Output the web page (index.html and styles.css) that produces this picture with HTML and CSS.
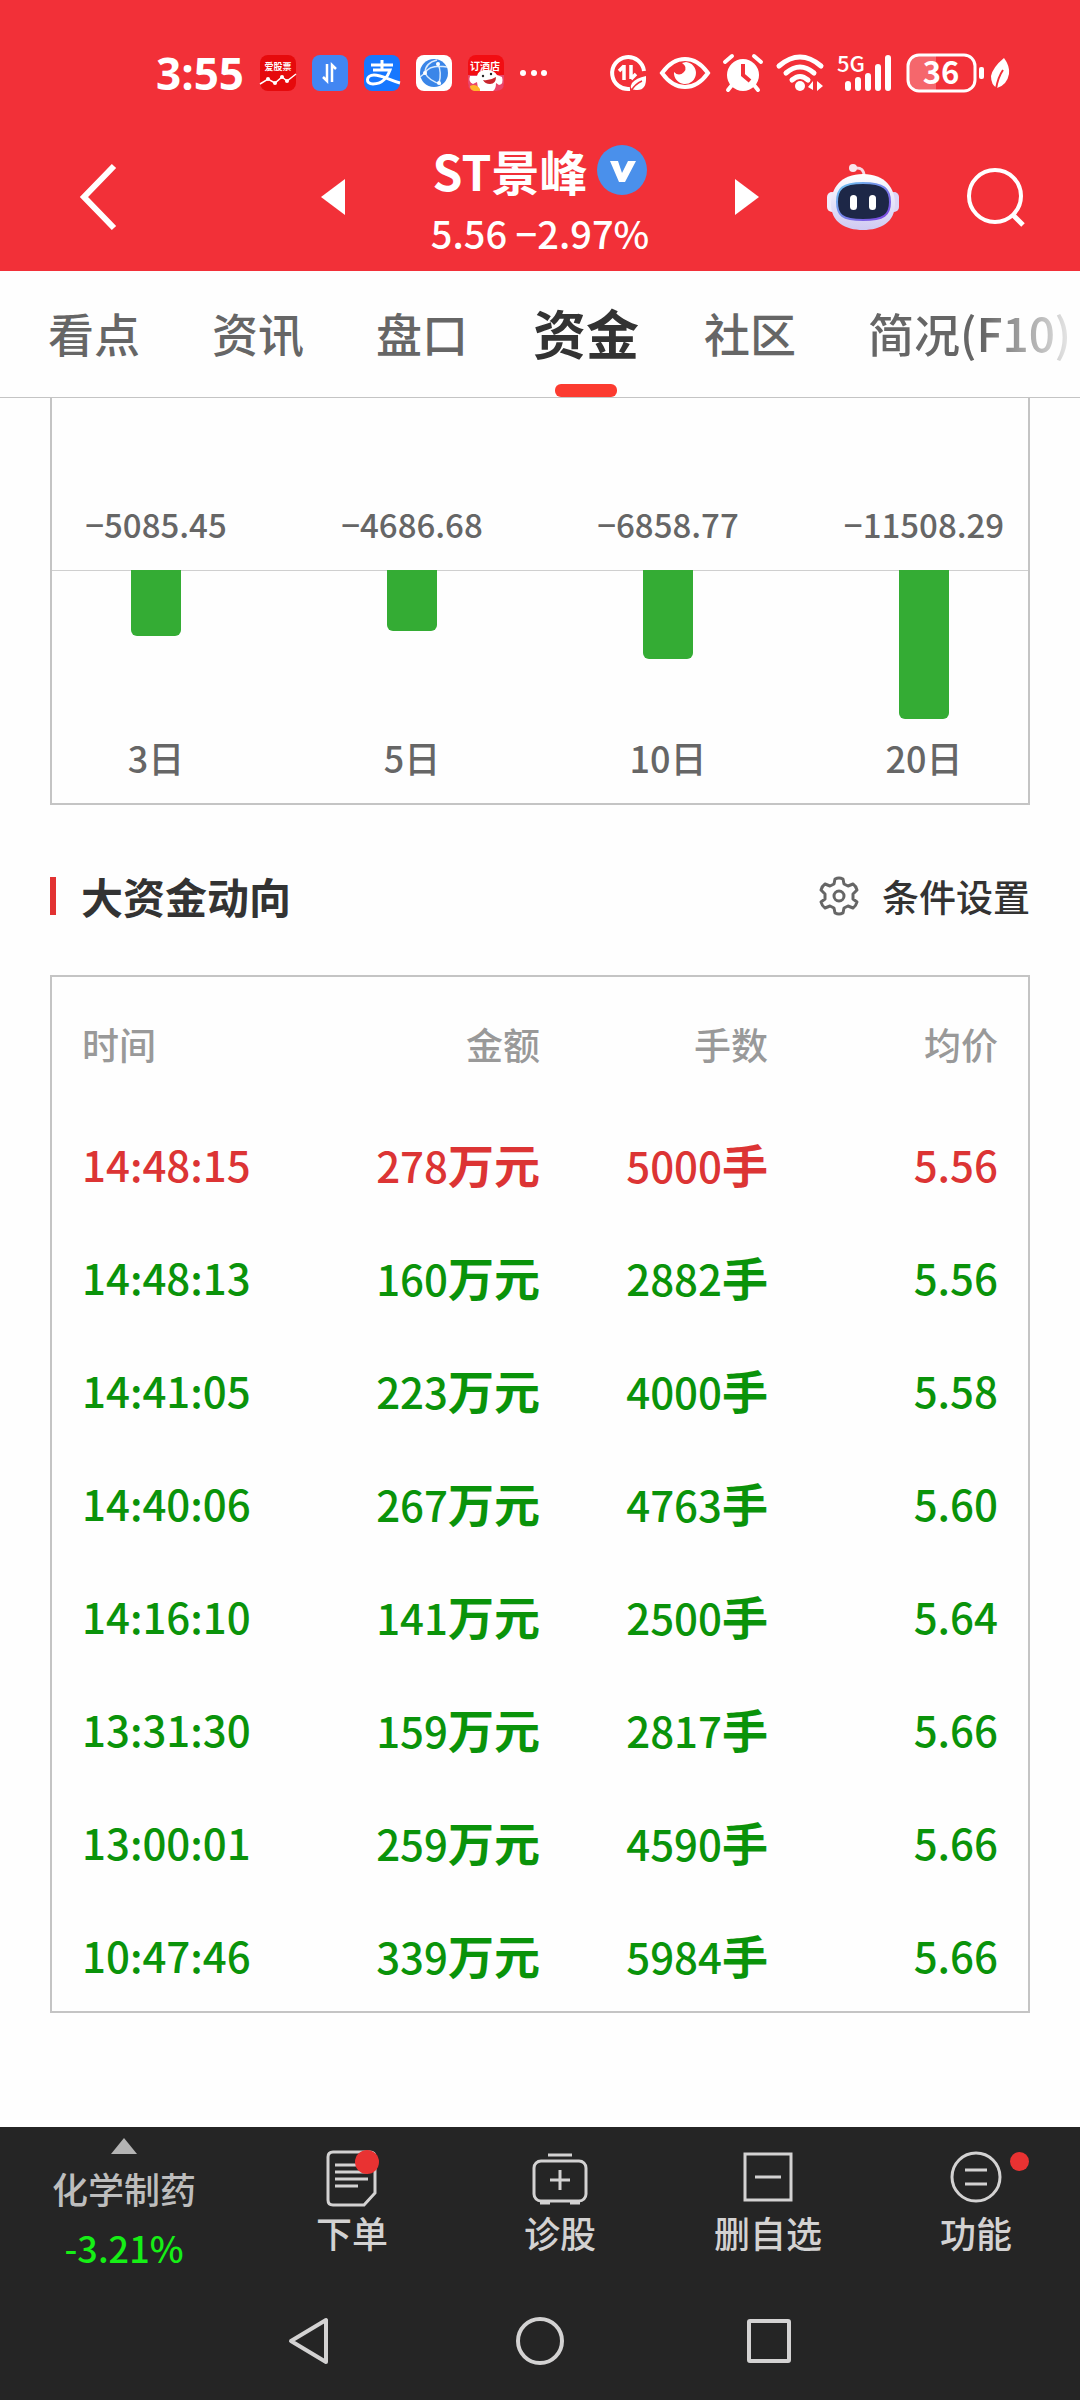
FILE: index.html
```html
<!DOCTYPE html>
<html lang="zh-CN">
<head>
  <meta charset="UTF-8" />
  <meta name="viewport" content="width=device-width, initial-scale=1.0"/>
  <title>ST景峰 - 资金</title>
  <link rel="stylesheet" href="styles.css">
</head>
<body>
  <header class="top">
    <!-- Status bar -->
    <div class="status-bar">
      <div class="status-left">
        <span class="clock">3:55</span>
        <svg class="app-icon" viewBox="0 0 36 36">
          <rect width="36" height="36" rx="8" fill="#e60a0c"/>
          <text x="18" y="15" font-size="9" font-weight="700" fill="#fff" text-anchor="middle">爱股票</text>
          <path d="M0 29L8 24L15 28L22 22L27 26L36 19" fill="none" stroke="#fff" stroke-width="1.5"/>
          <circle cx="8" cy="24" r="2" fill="#fff"/><circle cx="15" cy="28" r="2" fill="#fff"/><circle cx="22" cy="22" r="2" fill="#fff"/><circle cx="27" cy="26" r="2" fill="#fff"/>
        </svg>
        <svg class="app-icon" viewBox="0 0 36 36">
          <rect width="36" height="36" rx="8" fill="#4286f2"/>
          <path d="M15 9V26L11 22M20 27V10L24 14" fill="none" stroke="#fff" stroke-width="2.5"/>
        </svg>
        <svg class="app-icon" viewBox="0 0 36 36">
          <rect width="36" height="36" rx="8" fill="#1677ff"/>
          <path d="M7 10H29M18 5V15M9 15H26C24 21 19 29 9 29C1 29 2 20 10 20C18 20 25 25 36 28" fill="none" stroke="#fff" stroke-width="3"/>
        </svg>
        <svg class="app-icon" viewBox="0 0 36 36">
          <rect width="36" height="36" rx="8" fill="#fff"/>
          <circle cx="18" cy="18" r="14" fill="#3a86e8"/>
          <path d="M21 5Q9 8 9 18Q13 26 25 29M22 9Q26 18 23 28M9 18Q14 9 31 12M9 18L4 22" fill="none" stroke="#d9ebff" stroke-width="1.5"/>
          <circle cx="9" cy="18" r="2" fill="#fff"/><circle cx="22" cy="9" r="2" fill="#fff"/><circle cx="23" cy="28" r="2" fill="#fff"/>
        </svg>
        <svg class="app-icon" viewBox="0 0 36 36">
          <rect width="36" height="36" rx="8" fill="#f20d12"/>
          <path d="M0 20H36V28Q36 36 28 36H8Q0 36 0 28Z" fill="#e9466a"/>
          <text x="17" y="15" font-size="10" font-weight="700" fill="#fff" text-anchor="middle">订酒店</text>
          <path d="M9 21Q10 15 18 15Q26 15 29 20L34 22Q36 29 31 30L28 28Q28 34 25 36H12Q9 32 9 27L5 29Q0 27 2 21Z" fill="#fff"/>
          <path d="M15 25Q22 26 28 22Q28 29 22 29Q17 29 15 25Z" fill="#c9252d"/>
          <circle cx="15" cy="21" r="1.2" fill="#222"/><circle cx="23" cy="19" r="1.2" fill="#222"/>
          <path d="M2 31Q8 28 12 34V36H6Q2 35 2 31Z" fill="#ffb52b"/>
        </svg>
        <svg class="more-dots" viewBox="0 0 28 6" fill="#fff"><circle cx="3" cy="3" r="3"/><circle cx="14" cy="3" r="3"/><circle cx="24" cy="3" r="3"/></svg>
      </div>
      <div class="status-right">
        <svg width="38" height="38" viewBox="0 0 38 38" fill="none" stroke="#fff">
          <path d="M35 17A16 16 0 1 0 21 35" stroke-width="4"/>
          <path d="M15 11V26M15 12L10 17M22 11V25M22 25L27 20" stroke-width="3.5"/>
          <path d="M37 22Q38 37 27 36Q19 36 23 29Q27 24 37 22Z" fill="#fff" stroke="none"/>
          <path d="M22 37Q26 30 33 27" stroke="#f23038" stroke-width="1.5"/>
        </svg>
        <svg width="50" height="34" viewBox="0 0 50 34">
          <path d="M2 17Q12 3 25 3Q38 3 48 17Q38 31 25 31Q12 31 2 17Z" fill="none" stroke="#fff" stroke-width="4"/>
          <path d="M26 6A11 11 0 1 1 14 16Q19 21 24 16Q28 11 22 7Z" fill="#fff"/>
        </svg>
        <svg width="40" height="38" viewBox="0 0 40 38">
          <circle cx="20" cy="21" r="16" fill="#fff"/>
          <path d="M2 8L9 2M38 8L31 2M9 31L5 36M31 31L35 36" stroke="#fff" stroke-width="4" stroke-linecap="round"/>
          <path d="M20 10V21L27 27" fill="none" stroke="#f23038" stroke-width="4"/>
        </svg>
        <svg width="48" height="38" viewBox="0 0 48 38" fill="none" stroke="#fff" stroke-width="5" stroke-linecap="round">
          <path d="M3 12Q24 -6 45 12M10 19Q24 7 38 19M16 26Q24 19 32 26"/>
          <circle cx="24" cy="32" r="5" fill="#fff" stroke="none"/>
          <path d="M37 27V36L32 33ZM41 37V27L47 32Z" fill="#fff" stroke="none"/>
        </svg>
        <svg width="56" height="38" viewBox="0 0 56 38">
          <text x="0" y="18" font-size="22" font-weight="500" fill="#fff">5G</text>
          <path d="M11 30V34M21 26V34M31 22V34M41 13V34M51 4V34" stroke="#fff" stroke-width="6" stroke-linecap="round"/>
        </svg>
        <div class="battery">
          <svg width="80" height="40" viewBox="0 0 80 40">
            <path d="M14 2H30V38H14Q3 38 3 27V13Q3 2 14 2Z" fill="#f5676c"/>
            <rect x="2" y="2" width="67" height="36" rx="11" fill="none" stroke="#fff" stroke-width="3"/>
            <text x="35" y="31" font-size="31" font-weight="700" fill="#fff" text-anchor="middle">36</text>
            <rect x="73" y="14" width="5" height="12" rx="2" fill="#fff"/>
          </svg>
          <svg width="20" height="32" viewBox="0 0 20 32">
            <path d="M14 1Q20 9 19 17Q17 28 7 31Q1 28 1 19Q3 10 14 1Z" fill="#fff"/>
            <path d="M6 32Q8 20 13 13" fill="none" stroke="#f23038" stroke-width="2"/>
          </svg>
        </div>
      </div>
    </div>

    <!-- Stock header -->
    <div class="stock-header">
      <div class="side side-left">
        <button type="button" class="icon-btn" aria-label="返回">
          <svg width="36" height="66" viewBox="0 0 36 66"><path d="M34 2L4 33L34 64" fill="none" stroke="#fff" stroke-width="6"/></svg>
        </button>
        <button type="button" class="icon-btn" aria-label="上一只">
          <svg width="24" height="36" viewBox="0 0 24 36"><path d="M24 0V36L0 18Z" fill="#fff"/></svg>
        </button>
      </div>
      <div class="stock-title">
        <h1>ST景峰
          <svg width="50" height="50" viewBox="0 0 50 50"><circle cx="25" cy="25" r="25" fill="#4a90eb"/><path d="M13 16H21L25 28L31 16H39L28 37H22Z" fill="#fff"/></svg>
        </h1>
        <p>5.56 −2.97%</p>
      </div>
      <div class="side side-right">
        <button type="button" class="icon-btn" aria-label="下一只">
          <svg width="24" height="36" viewBox="0 0 24 36"><path d="M0 0V36L24 18Z" fill="#fff"/></svg>
        </button>
        <button type="button" class="icon-btn" aria-label="智能助手">
          <svg width="72" height="66" viewBox="0 0 72 66">
            <defs>
              <linearGradient id="shell" x1="0" y1="0" x2="0" y2="1"><stop offset="0" stop-color="#fff"/><stop offset="1" stop-color="#cfc9f2"/></linearGradient>
              <linearGradient id="rim" x1="0" y1="0" x2="1" y2="1"><stop offset="0" stop-color="#6fc7f0"/><stop offset="1" stop-color="#7c3fe0"/></linearGradient>
            </defs>
            <path d="M28 4Q37 3 37 12" fill="none" stroke="#f6d9e4" stroke-width="3"/>
            <circle cx="26" cy="4" r="4" fill="#f9e6ee"/>
            <rect x="0" y="28" width="10" height="20" rx="5" fill="#f0ecfb"/>
            <rect x="62" y="28" width="10" height="20" rx="5" fill="#dcd6f6"/>
            <path d="M36 10C58 10 68 24 68 40C68 58 54 66 36 66C18 66 4 58 4 40C4 24 14 10 36 10Z" fill="url(#shell)"/>
            <path d="M36 19C57 19 63 25 63 38C63 51 57 56 36 56C15 56 10 51 10 38C10 25 15 19 36 19Z" fill="#1d2747" stroke="url(#rim)" stroke-width="2"/>
            <rect x="23" y="31" width="7" height="15" rx="3.5" fill="#fff"/>
            <rect x="42" y="31" width="7" height="15" rx="3.5" fill="#fff"/>
          </svg>
        </button>
        <button type="button" class="icon-btn" aria-label="搜索">
          <svg width="60" height="60" viewBox="0 0 60 60" fill="none" stroke="#fff" stroke-width="4"><circle cx="29" cy="29" r="26"/><path d="M47 48L57 58" stroke-width="5"/></svg>
        </button>
      </div>
    </div>
  </header>

  <nav class="tabs">
    <a href="#">看点</a>
    <a href="#">资讯</a>
    <a href="#">盘口</a>
    <a href="#" class="active">资金</a>
    <a href="#">社区</a>
    <a href="#" class="fade">简况(F10)</a>
  </nav>

  <main class="content">
    <!-- Net inflow by period -->
    <section class="chart">
      <div class="chart-row chart-values">
        <span>−5085.45</span>
        <span>−4686.68</span>
        <span>−6858.77</span>
        <span>−11508.29</span>
      </div>
      <div class="chart-row chart-bars">
        <div class="bar" style="height: 66px"></div>
        <div class="bar" style="height: 61px"></div>
        <div class="bar" style="height: 89px"></div>
        <div class="bar" style="height: 149px"></div>
      </div>
      <div class="chart-row chart-labels">
        <span>3日</span>
        <span>5日</span>
        <span>10日</span>
        <span>20日</span>
      </div>
    </section>

    <div class="section-header">
      <h2>大资金动向</h2>
      <button type="button" class="settings-btn">
        <svg width="38" height="38" viewBox="0 0 38 38" fill="none" stroke="#666" stroke-width="3" stroke-linejoin="round">
          <path d="M15 2Q19 0 23 2L24 7L28 9L33 7Q36 9 37 13L33 17V22L37 25Q36 29 33 31L28 29L24 31L23 36Q19 38 15 36L14 31L10 29L5 31Q2 29 1 25L5 22V17L1 13Q2 9 5 7L10 9L14 7Z"/>
          <circle cx="19" cy="19" r="5"/>
        </svg>
        条件设置
      </button>
    </div>

    <!-- Large orders -->
    <section class="orders">
      <table>
        <colgroup>
          <col><col class="col-mid"><col class="col-mid"><col>
        </colgroup>
        <thead>
          <tr><th>时间</th><th>金额</th><th>手数</th><th>均价</th></tr>
        </thead>
        <tbody>
          <tr class="buy"><td>14:48:15</td><td>278<b>万元</b></td><td>5000<b>手</b></td><td>5.56</td></tr>
          <tr><td>14:48:13</td><td>160<b>万元</b></td><td>2882<b>手</b></td><td>5.56</td></tr>
          <tr><td>14:41:05</td><td>223<b>万元</b></td><td>4000<b>手</b></td><td>5.58</td></tr>
          <tr><td>14:40:06</td><td>267<b>万元</b></td><td>4763<b>手</b></td><td>5.60</td></tr>
          <tr><td>14:16:10</td><td>141<b>万元</b></td><td>2500<b>手</b></td><td>5.64</td></tr>
          <tr><td>13:31:30</td><td>159<b>万元</b></td><td>2817<b>手</b></td><td>5.66</td></tr>
          <tr><td>13:00:01</td><td>259<b>万元</b></td><td>4590<b>手</b></td><td>5.66</td></tr>
          <tr><td>10:47:46</td><td>339<b>万元</b></td><td>5984<b>手</b></td><td>5.66</td></tr>
        </tbody>
      </table>
    </section>
  </main>

  <footer class="bottom">
    <div class="toolbar">
      <button type="button" class="sector">
        <svg width="26" height="16" viewBox="0 0 26 16"><path d="M13 0L26 16H0Z" fill="#b4b4b4"/></svg>
        <span>化学制药</span>
        <span class="sector-change">-3.21%</span>
      </button>
      <button type="button" class="tool">
        <svg width="56" height="56" viewBox="0 0 56 56" fill="none" stroke="#d3d2d2" stroke-width="3">
          <path d="M9 2H46Q51 2 51 7V43L40 55H9Q4 55 4 50V7Q4 2 9 2Z"/>
          <path d="M11 15H44M11 22H44M11 29H44M11 36H34"/>
          <circle cx="43" cy="12" r="12" fill="#e93232" stroke="none"/>
        </svg>
        <span>下单</span>
      </button>
      <button type="button" class="tool">
        <svg width="58" height="56" viewBox="0 0 58 56" fill="none" stroke="#d3d2d2" stroke-width="3">
          <rect x="3" y="11" width="52" height="40" rx="7"/>
          <path d="M17 5H41M29 20V40M19 30H39M9 53H19M39 53H49"/>
        </svg>
        <span>诊股</span>
      </button>
      <button type="button" class="tool">
        <svg width="50" height="56" viewBox="0 0 50 56" fill="none" stroke="#d3d2d2" stroke-width="3">
          <rect x="2" y="4" width="46" height="46"/>
          <path d="M12 27H38"/>
        </svg>
        <span>删自选</span>
      </button>
      <button type="button" class="tool">
        <svg width="52" height="56" viewBox="0 0 52 56" fill="none" stroke="#d3d2d2" stroke-width="3">
          <circle cx="26" cy="27" r="24"/>
          <path d="M15 20H37M15 34H37"/>
        </svg>
        <span>功能</span>
        <i class="dot"></i>
      </button>
    </div>
    <div class="system-nav">
      <button type="button" class="icon-btn" aria-label="返回键">
        <svg width="48" height="48" viewBox="0 0 48 48"><path d="M40 3V45L5 24Z" fill="none" stroke="#d3d2d2" stroke-width="4" stroke-linejoin="round"/></svg>
      </button>
      <button type="button" class="icon-btn" aria-label="主屏幕">
        <svg width="48" height="48" viewBox="0 0 48 48"><circle cx="24" cy="24" r="22" fill="none" stroke="#d3d2d2" stroke-width="4"/></svg>
      </button>
      <button type="button" class="icon-btn" aria-label="最近任务">
        <svg width="48" height="48" viewBox="0 0 48 48"><rect x="3" y="4" width="40" height="40" rx="1" fill="none" stroke="#d3d2d2" stroke-width="4"/></svg>
      </button>
    </div>
  </footer>
</body>
</html>
```
FILE: styles.css
```css
* {
  box-sizing: border-box;
}

body {
  margin: 0;
  min-height: 100vh;
  display: flex;
  flex-direction: column;
  background-color: #fefefe;
  color: #333;
  font-family: "Noto Sans CJK SC", sans-serif;
  font-weight: 500;
}

button {
  border: none;
  padding: 0;
  background: none;
  color: inherit;
  font: inherit;
  cursor: pointer;
}

svg {
  display: block;
  flex: none;
  overflow: visible;
}

/* Header */
.top {
  background-color: #f23038;
  color: white;
}

.status-bar {
  display: flex;
  justify-content: space-between;
  align-items: center;
  height: 130px;
  padding: 16px 70px 0 156px;
}

.status-left {
  display: flex;
  align-items: center;
  gap: 16px;
}

.status-right {
  display: flex;
  align-items: center;
  gap: 13px;
}

.battery {
  display: flex;
  align-items: center;
  gap: 4px;
}

.clock {
  font-family: "Open Sans", sans-serif;
  font-size: 44px;
  line-height: 46px;
  font-weight: 700;
}

.app-icon {
  width: 36px;
  height: 36px;
}

.more-dots {
  width: 28px;
  height: 6px;
}

.stock-header {
  display: grid;
  grid-template-columns: 1fr 390px 1fr;
  height: 141px;
}

.side {
  display: flex;
  justify-content: space-between;
  align-items: center;
  padding-bottom: 8px;
}

.side-left {
  padding-left: 80px;
}

.side-right {
  padding-right: 54px;
}

.stock-title {
  text-align: center;
  padding-top: 10px;
}

.stock-title h1 {
  display: flex;
  justify-content: center;
  align-items: center;
  gap: 10px;
  margin: 0;
  font-size: 48px;
  line-height: 60px;
  font-weight: 700;
}

.stock-title p {
  margin: 0;
  font-size: 38px;
  line-height: 66px;
}

/* Tabs */
.tabs {
  display: flex;
  height: 127px;
  padding-left: 12px;
  border-bottom: 1px solid #c4c4c4;
  overflow: hidden;
  white-space: nowrap;
}

.tabs a {
  flex: none;
  padding: 0 36px;
  color: #666;
  font-size: 46px;
  line-height: 122px;
  text-decoration: none;
}

.tabs a.active {
  position: relative;
  padding: 0 29px;
  color: #333;
  font-size: 53px;
  font-weight: 700;
}

.tabs a.active::after {
  content: "";
  position: absolute;
  bottom: 0;
  left: 50%;
  width: 62px;
  height: 13px;
  margin-left: -31px;
  border-radius: 6px;
  background-color: #fc3b30;
}

.tabs a.fade {
  -webkit-mask-image: linear-gradient(to right, #000 55%, transparent 92%);
  mask-image: linear-gradient(to right, #000 55%, transparent 92%);
}

/* Content */
.content {
  flex: 1;
  padding: 0 50px;
}

.chart {
  border: 2px solid #c4c4c4;
  border-top: none;
}

.chart-row {
  display: grid;
  grid-template-columns: repeat(4, minmax(0, 1fr));
  gap: 48px;
  justify-items: center;
  color: #666;
}

.chart-values {
  height: 172px;
  align-items: end;
  padding-bottom: 21px;
  font-size: 33px;
  line-height: 50px;
}

.chart-bars {
  height: 160px;
  align-items: start;
  border-top: 1px solid #cfcfcf;
}

.bar {
  width: 50px;
  margin-top: -1px;
  border-radius: 0 0 6px 6px;
  background-color: #34ac34;
}

.chart-labels {
  padding-bottom: 19px;
  font-size: 36px;
  line-height: 54px;
}

.section-header {
  display: flex;
  justify-content: space-between;
  align-items: center;
  height: 170px;
  padding-top: 12px;
}

.section-header h2 {
  display: flex;
  align-items: center;
  gap: 25px;
  margin: 0;
  font-size: 42px;
  line-height: 60px;
  font-weight: 700;
}

.section-header h2::before {
  content: "";
  width: 6px;
  height: 38px;
  background-color: #e23232;
}

.settings-btn {
  display: flex;
  align-items: center;
  gap: 24px;
  font-size: 37px;
  line-height: 54px;
}

.orders {
  padding: 9px 0 6px;
  border: 2px solid #c4c4c4;
}

.orders table {
  width: 100%;
  table-layout: fixed;
  border-collapse: collapse;
}

.col-mid {
  width: 228px;
}

.orders th {
  height: 115px;
  padding: 0;
  color: #999;
  font-size: 37px;
  font-weight: 500;
  text-align: right;
}

.orders td {
  height: 113px;
  padding: 13px 0 0;
  color: #0a930a;
  font-size: 42px;
  line-height: 60px;
  text-align: right;
}

.orders td b {
  font-size: 46px;
  font-weight: 700;
}

.orders th:first-child,
.orders td:first-child {
  padding-left: 30px;
  text-align: left;
}

.orders th:last-child,
.orders td:last-child {
  padding-right: 30px;
}

.orders .buy td {
  color: #dc3434;
}

/* Bottom bars */
.bottom {
  background-color: #252525;
  color: #d3d2d2;
}

.toolbar {
  display: grid;
  grid-template-columns: 248px repeat(4, 1fr);
  height: 154px;
  font-size: 36px;
  line-height: 40px;
}

.tool,
.sector {
  display: flex;
  flex-direction: column;
  align-items: center;
}

.tool {
  position: relative;
  gap: 6px;
  padding-top: 23px;
}

.sector {
  gap: 14px;
  padding-top: 11px;
  color: #bdbdbd;
}

.sector-change {
  color: #16ef16;
  line-height: 50px;
}

.dot {
  position: absolute;
  top: 25px;
  right: 51px;
  width: 19px;
  height: 19px;
  border-radius: 50%;
  background-color: #e93232;
}

.system-nav {
  display: flex;
  justify-content: center;
  align-items: center;
  gap: 182px;
  height: 119px;
}
```
